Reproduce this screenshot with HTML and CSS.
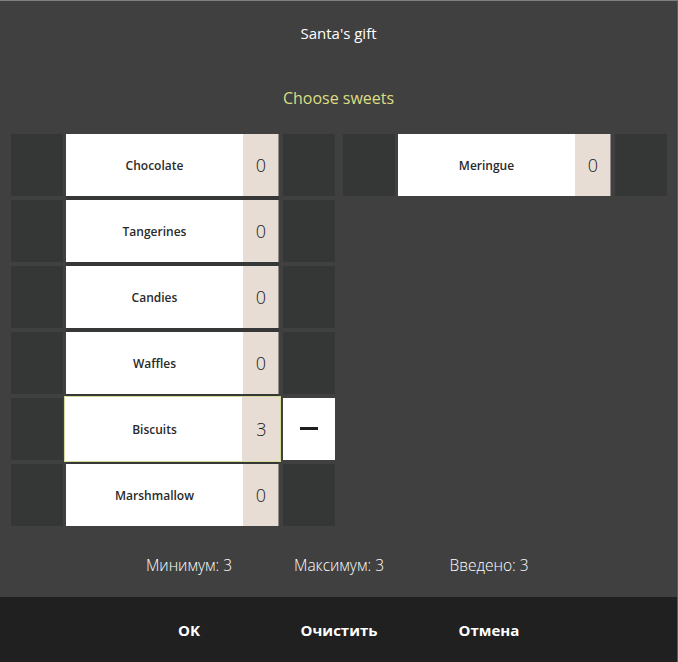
FILE: index.html
```html
<!DOCTYPE html>
<html>
<head>
<meta charset="utf-8">
<link rel="stylesheet" href="styles.css">
</head>
<body>
<div class="dialog">
  <div class="header">Santa's gift</div>
  <div class="subtitle">Choose sweets</div>
  <div class="grid">
    <div class="col">
      <div class="item"><div class="side"></div><div class="mid"><div class="name">Chocolate</div><div class="count">0</div></div><div class="side"></div></div>
      <div class="item"><div class="side"></div><div class="mid"><div class="name">Tangerines</div><div class="count">0</div></div><div class="side"></div></div>
      <div class="item"><div class="side"></div><div class="mid"><div class="name">Candies</div><div class="count">0</div></div><div class="side"></div></div>
      <div class="item"><div class="side"></div><div class="mid"><div class="name">Waffles</div><div class="count">0</div></div><div class="side"></div></div>
      <div class="item"><div class="side"></div><div class="mid sel"><div class="name">Biscuits</div><div class="count">3</div></div><div class="side minus"><span class="dash"></span></div></div>
      <div class="item last"><div class="side"></div><div class="mid"><div class="name">Marshmallow</div><div class="count">0</div></div><div class="side"></div></div>
    </div>
    <div class="col">
      <div class="item last"><div class="side"></div><div class="mid"><div class="name">Meringue</div><div class="count">0</div></div><div class="side"></div></div>
    </div>
  </div>
  <div class="stats">
    <div>Минимум: 3</div>
    <div>Максимум: 3</div>
    <div>Введено: 3</div>
  </div>
  <div class="footer">
    <div class="btn">OK</div>
    <div class="btn">Очистить</div>
    <div class="btn">Отмена</div>
  </div>
</div>
</body>
</html>
```
FILE: styles.css
```css
html, body {
  margin: 0;
  padding: 0;
}
body {
  width: 678px;
  height: 662px;
  background: #3f403f;
  font-family: "Open Sans", "Noto Sans", sans-serif;
  overflow: hidden;
}
.dialog {
  box-sizing: border-box;
  width: 678px;
  height: 662px;
  display: flex;
  flex-direction: column;
  border-top: 1px solid #7e7f7e;
  border-right: 1px solid #5c5d5c;
}
.header {
  height: 63px;
  display: flex;
  align-items: center;
  justify-content: center;
  color: #ffffff;
  font-size: 15px;
  padding-top: 1px;
  box-sizing: border-box;
}
.subtitle {
  height: 70px;
  display: flex;
  align-items: center;
  justify-content: center;
  color: #dcdd84;
  font-size: 16px;
  padding-bottom: 2px;
  box-sizing: border-box;
}
.grid {
  display: flex;
  gap: 8px;
  padding-left: 11px;
  height: 392px;
}
.col {
  width: 324px;
  display: flex;
  flex-direction: column;
  gap: 4px;
}
.item {
  height: 62px;
  display: flex;
}
.side {
  width: 52px;
  background: #353736;
  flex: none;
}
.item .side:first-child {
  margin-right: 3px;
}
.item .side:last-child {
  margin-left: 4px;
}
.mid {
  position: relative;
  width: 213px;
  display: flex;
  flex: none;
  box-shadow: 0 4px 0 #363837;
}
.item.last .mid {
  box-shadow: none;
}
.mid.sel::before {
  content: "";
  position: absolute;
  left: -2px;
  right: -2px;
  top: -2px;
  bottom: -2px;
  border: 1px solid #d4d89a;
  background: linear-gradient(to right, #ffffff calc(100% - 38px), #e8ddd5 0);
}
.name {
  position: relative;
  width: 177px;
  flex: none;
  background: #ffffff;
  display: flex;
  align-items: center;
  justify-content: center;
  font-size: 12px;
  font-weight: 600;
  color: #2a2a2a;
}
.count {
  position: relative;
  box-sizing: border-box;
  width: 36px;
  flex: none;
  background: #e8ddd5;
  display: flex;
  align-items: center;
  justify-content: center;
  font-size: 18px;
  font-weight: 300;
  color: #1a1a1a;
  border-right: 1px solid #8f8c89;
  padding-left: 1px;
}
.mid.sel .name, .mid.sel .count {
  background: transparent;
}
.mid.sel .count {
  border-right: none;
}
.minus {
  background: #ffffff;
  display: flex;
  align-items: center;
  justify-content: center;
}
.dash {
  width: 18px;
  height: 3px;
  background: #1e1e1e;
  margin-top: -2px;
}
.stats {
  height: 71px;
  display: grid;
  grid-template-columns: 150px 150px 150px;
  justify-content: center;
  align-items: center;
  color: #ffffff;
  font-size: 15.5px;
  font-weight: 300;
  text-align: center;
  padding-top: 7px;
  padding-left: 1px;
  box-sizing: border-box;
}
.footer {
  flex: 1;
  background: #202020;
  display: grid;
  grid-template-columns: 150px 150px 150px;
  justify-content: center;
  align-items: center;
  padding-left: 1px;
}
.btn {
  color: #ffffff;
  font-size: 15px;
  font-weight: 700;
  text-align: center;
}
```
